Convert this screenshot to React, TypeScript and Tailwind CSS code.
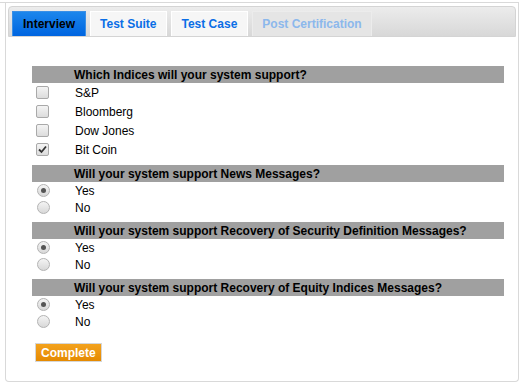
import { useState } from 'react';

const tabs = ['Interview', 'Test Suite', 'Test Case', 'Post Certification'];

const indices = ['S&P', 'Bloomberg', 'Dow Jones', 'Bit Coin'];

const radioQuestions = [
  'Will your system support News Messages?',
  'Will your system support Recovery of Security Definition Messages?',
  'Will your system support Recovery of Equity Indices Messages?',
];

function Check({ checked }: { checked: boolean }) {
  return (
    <span className="w-[13px] h-[13px] rounded-[2px] border border-[#a9a9a9] bg-gradient-to-b from-[#f4f4f4] to-[#dcdcdc] flex items-center justify-center">
      {checked && (
        <svg width="9" height="9" viewBox="0 0 9 9">
          <path d="M1 4.5 L3.5 7 L8 1.5" fill="none" stroke="#333" strokeWidth="1.8" />
        </svg>
      )}
    </span>
  );
}

function Radio({ checked }: { checked: boolean }) {
  return (
    <span className="w-[13px] h-[13px] rounded-full border border-[#b3b3b3] bg-gradient-to-b from-[#f4f4f4] to-[#d8d8d8] flex items-center justify-center">
      {checked && <span className="w-[5px] h-[5px] rounded-full bg-[#555]"></span>}
    </span>
  );
}

function Header({ text }: { text: string }) {
  return (
    <div className="h-[17px] bg-[#a0a0a0] pl-[42px] flex items-center text-[12px] font-bold text-black">
      {text}
    </div>
  );
}

export default function App() {
  const [checked, setChecked] = useState<boolean[]>([false, false, false, true]);
  const [answers, setAnswers] = useState<string[]>(['Yes', 'Yes', 'Yes']);

  return (
    <div className="w-[524px] h-[386px] bg-white pt-[2px]" style={{ fontFamily: '"Liberation Sans", Arial, sans-serif' }}>
      <div className="w-[519px] border-t border-[#d9d9d9]">
        <div className="ml-[5px] w-[514px] h-[379px] border-l border-r border-b border-[#d9d9d9] rounded-b-[4px] pt-[3px] px-[2px]">
          {/* Tab bar */}
          <div className="h-[31px] rounded-t-[4px] border border-[#d4d4d4] bg-gradient-to-b from-[#ececec] to-[#d8d8d8] flex items-end gap-[4px] pl-[3px]">
            {tabs.map((tab, i) => (
              <div
                key={tab}
                className={
                  i === 0
                    ? 'h-[25px] px-[10px] flex items-center text-[12px] font-bold text-black bg-gradient-to-b from-[#1c86ec] to-[#0064e0] border border-[#3a8fe6] border-b-0'
                    : i === 3
                    ? 'h-[25px] px-[9px] flex items-center text-[12px] font-bold text-[#8cb8ec] bg-[#e5e5e5] border border-[#ececec] border-b-0'
                    : i === 1
                    ? 'h-[25px] px-[9px] flex items-center text-[12px] font-bold text-[#0a6ee6] bg-[#f6f6f6] border border-white border-b-0'
                    : 'h-[25px] px-[10px] flex items-center text-[12px] font-bold text-[#0a6ee6] bg-[#f6f6f6] border border-white border-b-0'
                }
              >
                {tab}
              </div>
            ))}
          </div>

          {/* Questions */}
          <div className="pl-[24px] pr-[12px] pt-[29px]">
            <Header text="Which Indices will your system support?" />
            {indices.map((name, i) => (
              <label
                key={name}
                className="h-[19px] flex items-center text-[12px] text-black cursor-pointer"
                onClick={() => setChecked(checked.map((c, j) => (j === i ? !c : c)))}
              >
                <span className="w-[43px] pl-[4px] flex items-center">
                  <Check checked={checked[i]} />
                </span>
                {name}
              </label>
            ))}

            {radioQuestions.map((q, qi) => (
              <div key={q} className="mt-[6px]">
                <Header text={q} />
                {['Yes', 'No'].map((opt) => (
                  <label
                    key={opt}
                    className="h-[17px] flex items-center text-[12px] text-black cursor-pointer"
                    onClick={() => setAnswers(answers.map((a, j) => (j === qi ? opt : a)))}
                  >
                    <span className="w-[43px] pl-[5px] flex items-center">
                      <Radio checked={answers[qi] === opt} />
                    </span>
                    {opt}
                  </label>
                ))}
              </div>
            ))}

            <button className="mt-[13px] ml-[3px] h-[19px] px-[5px] border border-[#d6d6d6] bg-gradient-to-b from-[#f3a21c] to-[#e58a00] text-white text-[12px] font-bold flex items-center">
              Complete
            </button>
          </div>
        </div>
      </div>
    </div>
  );
}
